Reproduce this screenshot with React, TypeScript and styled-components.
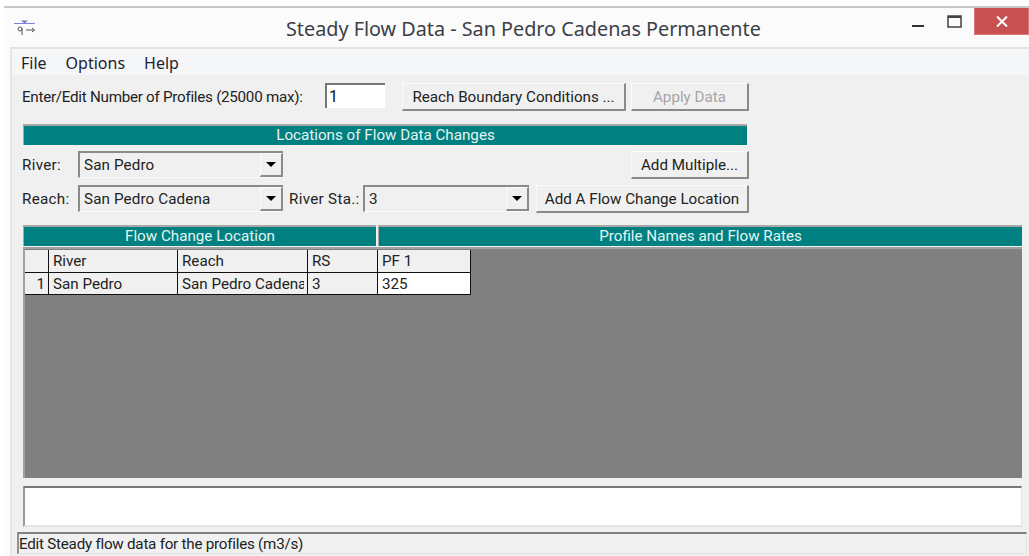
import React from "react";
import styled, { createGlobalStyle } from "styled-components";

const GlobalStyle = createGlobalStyle`
  html, body {
    margin: 0;
    padding: 0;
    width: 1029px;
    height: 556px;
    overflow: hidden;
    background: #fff;
    font-family: Roboto, "Liberation Sans", Arial, sans-serif;
  }
`;

const Page = styled.div`
  width: 1029px;
  height: 556px;
  padding: 6px 0 0 4px;
  box-sizing: border-box;
  overflow: hidden;
`;

const Frame = styled.div`
  height: 550px;
  border-top: 2px solid #c8c8c8;
  display: flex;
  flex-direction: column;
  background: #fbfbfb;
`;

const TitleBar = styled.div`
  height: 39px;
  flex: none;
  display: flex;
  position: relative;
  color: #3a3f47;
  font-family: "Noto Sans", sans-serif;
  font-size: 19.8px;
`;

const AppIcon = styled.svg`
  width: 24px;
  height: 16px;
  margin: 12px 0 0 9px;
  flex: none;
`;

const TitleText = styled.div`
  position: absolute;
  left: 282px;
  top: 6px;
  line-height: 30px;
  white-space: nowrap;
`;

const WindowButtons = styled.div`
  margin-left: auto;
  display: flex;
  align-items: flex-start;
`;

const GlyphBox = styled.div<{ $w: number }>`
  width: ${(p) => p.$w}px;
  height: 27px;
  display: flex;
  align-items: center;
  justify-content: center;
`;

const MinimizeBox = styled(GlyphBox)`
  padding: 8px 8px 0 0;
  box-sizing: border-box;
`;

const CloseBox = styled(GlyphBox)`
  background: #c75050;
  border: 1px solid #d77;
  border-top: none;
  box-sizing: border-box;
`;

const Client = styled.div`
  flex: 1;
  margin-left: 6px;
  border-top: 2px solid #e3e3e3;
  border-left: 2px solid #e6e6e6;
  background: #f0f0f0;
  display: flex;
  flex-direction: column;
  font-size: 15.2px;
  color: #222;
`;

const MenuBar = styled.div`
  height: 26px;
  flex: none;
  background: #f5f6f8;
  display: flex;
  align-items: center;
  gap: 19px;
  padding: 2px 0 0 9px;
  box-sizing: border-box;
  font-family: "Noto Sans", sans-serif;
  font-size: 16px;
  color: #1d2230;
`;

const Form = styled.div`
  padding: 8px 0 0 11px;
  display: flex;
  flex-direction: column;
  flex: 1;
`;

const Row = styled.div`
  display: flex;
  align-items: flex-start;
`;

const ProfilesRow = styled(Row)`
  height: 28px;
`;

const Label = styled.span<{ $w: number; $left?: number }>`
  width: ${(p) => p.$w}px;
  margin-left: ${(p) => p.$left ?? 0}px;
  flex: none;
  line-height: 28px;
  text-indent: -1px;
  letter-spacing: 0.3px;
  white-space: nowrap;
`;

const ProfilesLabel = styled(Label)`
  letter-spacing: -0.27px;
`;

const NumberInput = styled.div`
  width: 60px;
  height: 25px;
  box-sizing: border-box;
  flex: none;
  background: #fff;
  border-top: 2px solid #777;
  border-left: 2px solid #777;
  padding-left: 2px;
  line-height: 23px;
  font-size: 16px;
  color: #111;
`;

const Button = styled.div<{ $w: number; $off?: boolean; $left?: number }>`
  width: ${(p) => p.$w}px;
  height: 28px;
  margin-left: ${(p) => p.$left ?? 0}px;
  flex: none;
  box-sizing: border-box;
  border-top: 1px solid #fbfbfb;
  border-left: 1px solid #fbfbfb;
  border-right: 2px solid #8a8a8a;
  border-bottom: 2px solid #8a8a8a;
  background: #f0f0f0;
  display: flex;
  align-items: center;
  justify-content: center;
  white-space: nowrap;
  color: ${(p) => (p.$off ? "#a5a5a5" : "#222")};
`;

const PushedButton = styled(Button)`
  margin-left: auto;
`;

const Band = styled.div<{ $w: number; $left?: number }>`
  width: ${(p) => p.$w}px;
  height: 21px;
  margin-left: ${(p) => p.$left ?? 0}px;
  flex: none;
  box-sizing: border-box;
  border-top: 2px solid #a8a8a8;
  border-left: 1px solid #a8a8a8;
  background: #008080;
  color: #e4f4f2;
  text-align: center;
  line-height: 19px;
  white-space: nowrap;
`;

const LocationBand = styled(Band)`
  margin-top: 13px;
`;

const ComboRow = styled(Row)`
  width: 726px;
  height: 28px;
  margin-top: 6px;
`;

const Combo = styled.div<{ $w: number }>`
  width: ${(p) => p.$w}px;
  height: 27px;
  flex: none;
  box-sizing: border-box;
  border-top: 2px solid #8a8a8a;
  border-left: 2px solid #8a8a8a;
  border-bottom: 1px solid #fafafa;
  display: flex;
  align-items: stretch;
  padding-left: 4px;
  line-height: 24px;
  white-space: nowrap;
`;

const ComboValue = styled.span`
  flex: 1;
  letter-spacing: 0.12px;
`;

const ComboArrow = styled.div`
  width: 23px;
  box-sizing: border-box;
  border-right: 2px solid #8a8a8a;
  border-bottom: 2px solid #8a8a8a;
  border-top: 1px solid #fbfbfb;
  border-left: 1px solid #fbfbfb;
  display: flex;
  align-items: center;
  justify-content: center;
  &::after {
    content: "";
    border-left: 5px solid transparent;
    border-right: 5px solid transparent;
    border-top: 5px solid #000;
  }
`;

const BandRow = styled(Row)`
  margin-top: 12px;
  height: 21px;
`;

const GridArea = styled.div`
  width: 999px;
  height: 231px;
  margin-top: 1px;
  flex: none;
  box-sizing: border-box;
  background: #808080;
  border-top: 2px solid #a0a0a0;
  border-left: 2px solid #a0a0a0;
`;

const DataGrid = styled.div`
  display: grid;
  grid-template-columns: 23px 128px 129px 69px 92px;
  grid-template-rows: 22px 21px;
  width: max-content;
  background: #111;
  gap: 1px;
  margin-top: 1px;
  border-bottom: 1px solid #111;
  border-right: 1px solid #111;
`;

// the right border is cell coloured so long values clip short of the grid line
const Cell = styled.div<{ $white?: boolean; $end?: boolean }>`
  background: ${(p) => (p.$white ? "#fff" : "#f0f0f0")};
  border-right: 3px solid ${(p) => (p.$white ? "#fff" : "#f0f0f0")};
  padding: 0 ${(p) => (p.$end ? 0 : 0)}px 0 ${(p) => (p.$end ? 0 : 4)}px;
  text-align: ${(p) => (p.$end ? "right" : "left")};
  line-height: 22px;
  white-space: nowrap;
  overflow: hidden;
`;

const MessageBox = styled.div`
  width: 999px;
  height: 41px;
  margin-top: 8px;
  flex: none;
  box-sizing: border-box;
  background: #fff;
  border-top: 2px solid #777;
  border-left: 2px solid #9a9a9a;
  border-right: 1px solid #e4e4e4;
  border-bottom: 2px solid #e4e4e4;
`;

const StatusBar = styled.div`
  width: 1010px;
  height: 22px;
  margin: 5px 0 0 -6px;
  flex: none;
  box-sizing: border-box;
  border-top: 2px solid #808080;
  border-left: 2px solid #909090;
  border-right: 1px solid #e2e2e2;
  border-bottom: 1px solid #e2e2e2;
  line-height: 20px;
  letter-spacing: -0.24px;
  white-space: nowrap;
`;

const columns = ["", "River", "Reach", "RS", "PF 1"];

const App = () => (
  <Page>
    <GlobalStyle />
    <Frame>
      <TitleBar>
        <AppIcon viewBox="0 0 24 16">
          <path d="M1 3.500h21" stroke="#7c82d8" strokeWidth="1" fill="none" />
          <path d="M8 .5h7l-3.500 3z" fill="#6f76cf" />
          <circle cx="7" cy="9" r="2" stroke="#555" strokeWidth="1" fill="none" />
          <path d="M9 8v7M13 10h8M19 8l2.500 2-2.500 2" stroke="#555" strokeWidth="1" fill="none" />
        </AppIcon>
        <TitleText>Steady Flow Data - San Pedro Cadenas Permanente</TitleText>
        <WindowButtons>
          <MinimizeBox $w={26}>
            <svg width="12" height="4" viewBox="0 0 12 4">
              <rect y="1" width="12" height="2" fill="#333" />
            </svg>
          </MinimizeBox>
          <GlyphBox $w={39}>
            <svg width="15" height="13" viewBox="0 0 15 13">
              <path d="M1 1h13v11H1z" fill="none" stroke="#444" strokeWidth="1.500" />
              <rect x="1" y="1" width="13" height="2" fill="#444" />
            </svg>
          </GlyphBox>
          <CloseBox $w={55}>
            <svg width="12" height="11" viewBox="0 0 12 11">
              <path d="M1 .5l10 10M11 .5l-10 10" stroke="#fff" strokeWidth="2" fill="none" />
            </svg>
          </CloseBox>
        </WindowButtons>
      </TitleBar>
      <Client>
        <MenuBar>
          <span>File</span>
          <span>Options</span>
          <span>Help</span>
        </MenuBar>
        <Form>
          <ProfilesRow>
            <ProfilesLabel $w={302}>Enter/Edit Number of Profiles (25000 max):</ProfilesLabel>
            <NumberInput>1</NumberInput>
            <Button $w={224} $left={17}>Reach Boundary Conditions ...</Button>
            <Button $w={118} $left={5} $off>Apply Data</Button>
          </ProfilesRow>
          <LocationBand $w={724}>Locations of Flow Data Changes</LocationBand>
          <ComboRow>
            <Label $w={55}>River:</Label>
            <Combo $w={205}>
              <ComboValue>San Pedro</ComboValue>
              <ComboArrow />
            </Combo>
            <PushedButton $w={118}>Add Multiple...</PushedButton>
          </ComboRow>
          <ComboRow>
            <Label $w={55}>Reach:</Label>
            <Combo $w={205}>
              <ComboValue>San Pedro Cadena</ComboValue>
              <ComboArrow />
            </Combo>
            <Label $w={73} $left={7}>River Sta.:</Label>
            <Combo $w={166}>
              <ComboValue>3</ComboValue>
              <ComboArrow />
            </Combo>
            <Button $w={213} $left={7}>Add A Flow Change Location</Button>
          </ComboRow>
          <BandRow>
            <Band $w={353}>Flow Change Location</Band>
            <Band $w={644} $left={2}>Profile Names and Flow Rates</Band>
          </BandRow>
          <GridArea>
            <DataGrid>
              {columns.map((c) => (
                <Cell key={c}>{c}</Cell>
              ))}
              <Cell $end>1</Cell>
              <Cell>San Pedro</Cell>
              <Cell>San Pedro Cadena</Cell>
              <Cell>3</Cell>
              <Cell $white>325</Cell>
            </DataGrid>
          </GridArea>
          <MessageBox />
          <StatusBar>Edit Steady flow data for the profiles (m3/s)</StatusBar>
        </Form>
      </Client>
    </Frame>
  </Page>
);

export default App;
